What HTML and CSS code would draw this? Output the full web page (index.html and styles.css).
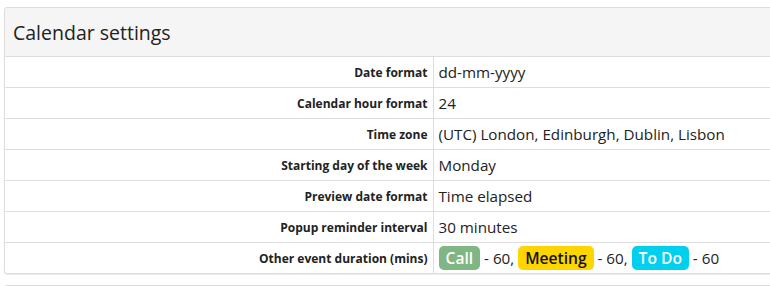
FILE: index.html
```html
<!DOCTYPE html>
<html lang="en">
<head>
    <meta charset="UTF-8">
    <meta name="viewport" content="width=device-width, initial-scale=1.0">
    <title>Calendar settings</title>
    <link rel="stylesheet" href="styles.css">
</head>
<body>
    <div class="panel">
        <div class="panel-heading">
            <h3 class="panel-title">Calendar settings</h3>
        </div>
        <table class="settings">
            <tr>
                <th>Date format</th>
                <td>dd-mm-yyyy</td>
            </tr>
            <tr>
                <th>Calendar hour format</th>
                <td>24</td>
            </tr>
            <tr>
                <th>Time zone</th>
                <td>(UTC) London, Edinburgh, Dublin, Lisbon</td>
            </tr>
            <tr>
                <th>Starting day of the week</th>
                <td>Monday</td>
            </tr>
            <tr>
                <th>Preview date format</th>
                <td>Time elapsed</td>
            </tr>
            <tr>
                <th>Popup reminder interval</th>
                <td>30 minutes</td>
            </tr>
            <tr>
                <th>Other event duration (mins)</th>
                <td>
                    <span class="label label-call">Call</span> - 60,
                    <span class="label label-meeting">Meeting</span> - 60,
                    <span class="label label-todo">To Do</span> - 60
                </td>
            </tr>
        </table>
    </div>
    <div class="panel"></div>
</body>
</html>
```

FILE: styles.css
```css
body {
    font-family: 'Open Sans', sans-serif;
    margin: 0;
    padding: 0;
    background: #fff;
    color: #333;
    overflow: hidden;
}
.panel {
    width: 800px;
    margin: 7px 0 0 4px;
    border: 1px solid #ddd;
    border-radius: 3px;
    background: #fff;
    box-shadow: 0 1px 1px rgba(0, 0, 0, 0.08);
}
.panel + .panel {
    margin-top: 11px;
    min-height: 20px;
}
.panel-heading {
    background: #f5f5f5;
    border-bottom: 1px solid #ddd;
    border-radius: 3px 3px 0 0;
    height: 48px;
    display: flex;
    align-items: center;
    padding: 0 8px;
}
.panel-title {
    margin: 0;
    font-size: 19.5px;
    font-weight: 500;
    color: #222;
}
.settings {
    width: 100%;
    border-collapse: collapse;
}
.settings tr + tr {
    border-top: 1px solid #ddd;
}
.settings th {
    width: 428px;
    height: 30px;
    padding: 0 5px;
    text-align: right;
    font-size: 12px;
    font-weight: 700;
    color: #222;
    border-right: 1px solid #ddd;
    box-sizing: border-box;
}
.settings td {
    height: 30px;
    padding: 0 5px;
    font-size: 15.2px;
    color: #222;
}
.label {
    display: inline-block;
    padding: 2px 7px;
    border-radius: 5px;
    font-size: 15.6px;
    font-weight: 600;
    line-height: 20px;
}
.label-call {
    background: #80b584;
    color: #fff;
}
.label-meeting {
    background: #ffd500;
    color: #111;
}
.label-todo {
    background: #00d0ee;
    color: #fff;
}
```
